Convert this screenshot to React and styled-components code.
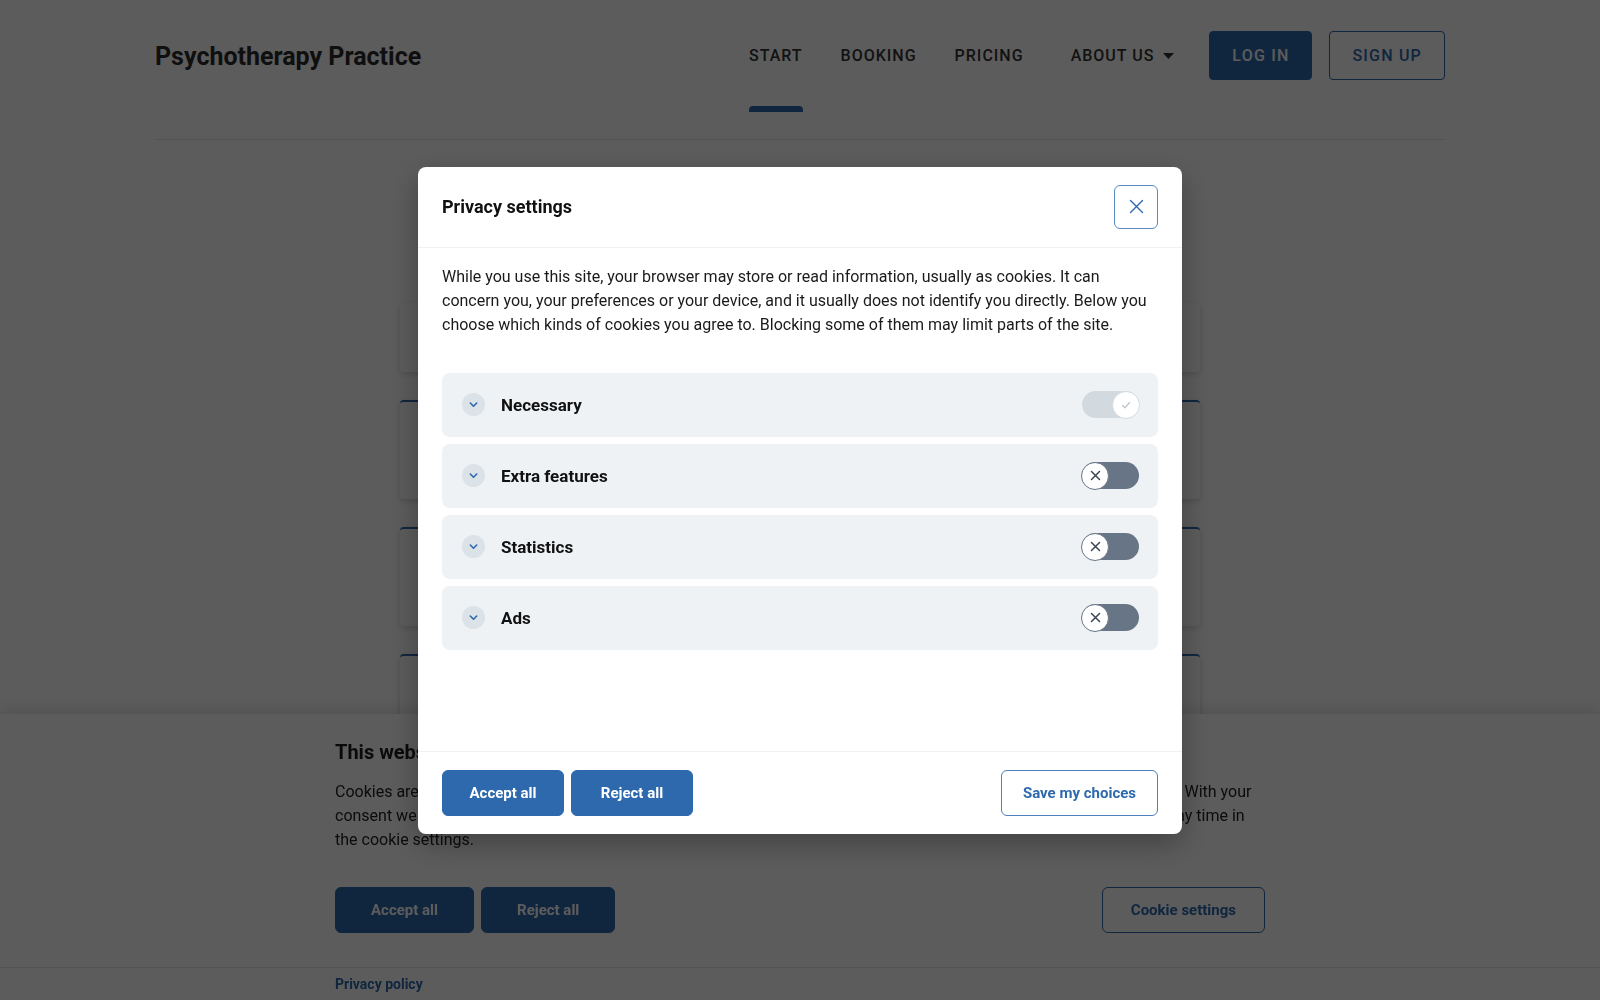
import React from "react";
import styled, { createGlobalStyle } from "styled-components";

const BLUE = "#2e69ad";

const categories = [
  { name: "Necessary", on: true, locked: true },
  { name: "Extra features", on: false },
  { name: "Statistics", on: false },
  { name: "Ads", on: false },
];

const GlobalStyle = createGlobalStyle`
  * { box-sizing: border-box; }
  body {
    margin: 0;
    background: #fff;
    color: #333;
    font-family: Roboto, "Noto Sans", "Liberation Sans", sans-serif;
  }
  button { font-family: inherit; cursor: pointer; }
`;

function CloseIcon() {
  return (
    <svg width="15" height="15" viewBox="0 0 15 15" fill="none">
      <path d="M1.5 1.5L13.5 13.5M13.5 1.5L1.5 13.5" stroke={BLUE} strokeWidth="1.4" strokeLinecap="round" />
    </svg>
  );
}

function Chevron() {
  return (
    <svg width="11" height="11" viewBox="0 0 11 11" fill="none">
      <path d="M2.3 4L5.5 7.2L8.7 4" stroke={BLUE} strokeWidth="1.6" strokeLinecap="round" strokeLinejoin="round" />
    </svg>
  );
}

function KnobIcon({ on }) {
  if (on) {
    return (
      <svg width="12" height="12" viewBox="0 0 12 12" fill="none">
        <path d="M2.5 6.5L5 8.8L9.5 3.5" stroke="#bcc5cb" strokeWidth="1.3" strokeLinecap="round" strokeLinejoin="round" />
      </svg>
    );
  }
  return (
    <svg width="11" height="11" viewBox="0 0 11 11" fill="none">
      <path d="M1.5 1.5L9.5 9.5M9.5 1.5L1.5 9.5" stroke="#3b4450" strokeWidth="1.5" strokeLinecap="round" />
    </svg>
  );
}

function Caret() {
  return (
    <svg width="11" height="6" viewBox="0 0 11 6">
      <polygon points="0,0 11,0 5.5,6" fill="#333" />
    </svg>
  );
}

export default function App() {
  return (
    <>
      <GlobalStyle />
      <Header>
        <Brand>Psychotherapy Practice</Brand>
        <Nav>
          <NavLink $active>Start</NavLink>
          <NavLink>Booking</NavLink>
          <NavLink>Pricing</NavLink>
          <NavLink $dropdown>
            About us <Caret />
          </NavLink>
        </Nav>
        <HeaderActions>
          <HeaderButton $filled>Log in</HeaderButton>
          <HeaderButton>Sign up</HeaderButton>
        </HeaderActions>
      </Header>

      <Main>
        <PageTitle>Welcome</PageTitle>
        <IntroCard>Book a session online in a few steps.</IntroCard>
        <Card>
          <CardTitle>Individual therapy</CardTitle>
          <CardText>One-to-one sessions in the practice or online.</CardText>
        </Card>
        <Card>
          <CardTitle>Couples therapy</CardTitle>
          <CardText>Sessions for partners who want to work together.</CardText>
        </Card>
        <Card>
          <CardTitle>Group therapy</CardTitle>
          <CardText>Small groups that meet every week.</CardText>
        </Card>
      </Main>

      <Banner>
        <BannerInner>
          <BannerTitle>This website uses cookies</BannerTitle>
          <BannerText>
            Cookies are small text files which help this website to work properly and to remember your settings between your visits. With your
            <br />
            consent we also use cookies for extra features, statistics and online ads. You can change or withdraw this consent at any time in
            <br />
            the cookie settings.
          </BannerText>
          <ButtonRow>
            <ButtonGroup>
              <BannerButton>Accept all</BannerButton>
              <BannerButton>Reject all</BannerButton>
            </ButtonGroup>
            <BannerButton $outline>Cookie settings</BannerButton>
          </ButtonRow>
        </BannerInner>
        <BannerFooter>
          <BannerInner>
            <PolicyLink>Privacy policy</PolicyLink>
          </BannerInner>
        </BannerFooter>
      </Banner>

      <Overlay>
        <Modal>
          <ModalHeader>
            <ModalTitle>Privacy settings</ModalTitle>
            <CloseButton aria-label="Close">
              <CloseIcon />
            </CloseButton>
          </ModalHeader>

          <ModalBody>
            <Intro>
              While you use this site, your browser may store or read information, usually as cookies. It can concern you, your
              preferences or your device, and it usually does not identify you directly. Below you choose which kinds of cookies you
              agree to. Blocking some of them may limit parts of the site.
            </Intro>
            <CategoryList>
              {categories.map((c) => (
                <CategoryRow key={c.name}>
                  <ChevronBadge>
                    <Chevron />
                  </ChevronBadge>
                  <CategoryName>{c.name}</CategoryName>
                  <Track $on={c.on}>
                    <Knob $on={c.on}>
                      <KnobIcon on={c.on} />
                    </Knob>
                  </Track>
                </CategoryRow>
              ))}
            </CategoryList>
          </ModalBody>

          <ModalFooter>
            <ButtonGroup>
              <ModalButton>Accept all</ModalButton>
              <ModalButton>Reject all</ModalButton>
            </ButtonGroup>
            <ModalButton $outline>Save my choices</ModalButton>
          </ModalFooter>
        </Modal>
      </Overlay>
    </>
  );
}

/* page behind */

const Header = styled.header`
  width: 1290px;
  height: 140px;
  margin: 0 auto;
  padding-top: 31px;
  display: flex;
  align-items: flex-start;
  border-bottom: 1px solid #e3e3e3;
`;

const Brand = styled.div`
  font-size: 25px;
  font-weight: 700;
  line-height: 51px;
  color: #2b2b2b;
  margin-right: auto;
`;

const Nav = styled.nav`
  display: flex;
  gap: 38px;
  margin-right: 35px;
`;

const NavLink = styled.a`
  position: relative;
  display: flex;
  align-items: center;
  gap: 9px;
  height: 49px;
  margin-left: ${(p) => (p.$dropdown ? "9px" : "0")};
  font-size: 16px;
  font-weight: 500;
  letter-spacing: 1px;
  text-transform: uppercase;
  color: #333;
  &::after {
    content: "";
    display: ${(p) => (p.$active ? "block" : "none")};
    position: absolute;
    left: 0;
    right: 0;
    top: 75px;
    height: 6px;
    border-radius: 4px 4px 0 0;
    background: ${BLUE};
  }
`;

const HeaderActions = styled.div`
  display: flex;
  gap: 17px;
`;

const HeaderButton = styled.button`
  height: 49px;
  padding: 0 22px;
  border-radius: 4px;
  border: 1px solid ${BLUE};
  background: ${(p) => (p.$filled ? BLUE : "#fff")};
  color: ${(p) => (p.$filled ? "#fff" : BLUE)};
  font-size: 16px;
  font-weight: 500;
  letter-spacing: 1.2px;
  text-transform: uppercase;
`;

const Main = styled.main`
  width: 800px;
  margin: 0 auto;
  padding: 55px 0 200px;
  display: flex;
  flex-direction: column;
  gap: 28px;
`;

const PageTitle = styled.h1`
  margin: 0 0 40px;
  font-size: 32px;
  line-height: 40px;
  text-align: center;
  color: #222;
`;

const IntroCard = styled.div`
  height: 69px;
  padding: 24px;
  background: #fff;
  border-radius: 4px;
  box-shadow: 0 2px 6px rgba(0, 0, 0, 0.16);
  font-size: 16px;
`;

const Card = styled.div`
  height: 99px;
  padding: 20px 24px;
  background: #fff;
  border-top: 2px solid ${BLUE};
  border-radius: 4px;
  box-shadow: 0 2px 6px rgba(0, 0, 0, 0.16);
`;

const CardTitle = styled.h3`
  margin: 0 0 8px;
  font-size: 18px;
  color: #222;
`;

const CardText = styled.p`
  margin: 0;
  font-size: 15px;
  color: #444;
`;

/* cookie banner */

const Banner = styled.section`
  position: fixed;
  left: 0;
  right: 0;
  bottom: 0;
  z-index: 10;
  background: #fff;
  box-shadow: 0 -4px 14px rgba(0, 0, 0, 0.12);
`;

const BannerInner = styled.div`
  width: 930px;
  margin: 0 auto;
`;

const BannerTitle = styled.h2`
  margin: 24px 0 14px;
  font-size: 20px;
  line-height: 28px;
  font-weight: 700;
  color: #1e1e1e;
`;

const BannerText = styled.p`
  margin: 0 0 35px;
  font-size: 16px;
  line-height: 24px;
  color: #222;
  white-space: nowrap;
`;

const ButtonRow = styled.div`
  display: flex;
  justify-content: space-between;
  margin-bottom: 34px;
`;

const ButtonGroup = styled.div`
  display: flex;
  gap: 7px;
`;

const BannerButton = styled.button`
  height: 46px;
  padding: ${(p) => (p.$outline ? "0 28px" : "0 35px")};
  border-radius: 6px;
  border: 1px solid ${BLUE};
  background: ${(p) => (p.$outline ? "#fff" : BLUE)};
  color: ${(p) => (p.$outline ? BLUE : "#fff")};
  font-size: 15px;
  font-weight: 700;
`;

const BannerFooter = styled.div`
  border-top: 1px solid #e6e6e6;
`;

const PolicyLink = styled.a`
  display: block;
  font-size: 14px;
  font-weight: 700;
  line-height: 32px;
  color: ${BLUE};
`;

/* privacy modal */

const Overlay = styled.div`
  position: fixed;
  inset: 0;
  z-index: 20;
  background: rgba(0, 0, 0, 0.64);
  display: flex;
  align-items: center;
  justify-content: center;
`;

const Modal = styled.div`
  width: 764px;
  height: 667px;
  background: #fff;
  border-radius: 8px;
  display: flex;
  flex-direction: column;
  box-shadow: 0 10px 30px rgba(0, 0, 0, 0.3);
`;

const ModalHeader = styled.div`
  display: flex;
  align-items: center;
  justify-content: space-between;
  padding: 18px 24px;
  border-bottom: 1px solid #eef0f2;
`;

const ModalTitle = styled.h2`
  margin: 0;
  font-size: 18px;
  font-weight: 700;
  color: #111;
`;

const CloseButton = styled.button`
  width: 44px;
  height: 44px;
  display: flex;
  align-items: center;
  justify-content: center;
  padding: 0;
  background: #fff;
  border: 1px solid #5a88bf;
  border-radius: 6px;
`;

const ModalBody = styled.div`
  flex: 1;
  padding: 17px 24px;
`;

const Intro = styled.p`
  margin: 0 0 36px;
  font-size: 16px;
  line-height: 24px;
  color: #1a1a1a;
`;

const CategoryList = styled.div`
  display: flex;
  flex-direction: column;
  gap: 7px;
`;

const CategoryRow = styled.div`
  height: 64px;
  padding: 0 19px 0 20px;
  display: flex;
  align-items: center;
  background: #eef2f5;
  border-radius: 8px;
`;

const ChevronBadge = styled.span`
  width: 23px;
  height: 23px;
  border-radius: 50%;
  background: #dbe2e8;
  display: flex;
  align-items: center;
  justify-content: center;
`;

const CategoryName = styled.span`
  margin-left: 16px;
  font-size: 17px;
  font-weight: 700;
  color: #111;
`;

const Track = styled.span`
  margin-left: auto;
  width: 57px;
  height: 27px;
  border-radius: 14px;
  display: flex;
  align-items: center;
  justify-content: ${(p) => (p.$on ? "flex-end" : "flex-start")};
  background: ${(p) => (p.$on ? "#d3dadf" : "#687586")};
`;

const Knob = styled.span`
  width: 28px;
  height: 28px;
  margin: 0 -1px;
  border-radius: 50%;
  background: #fff;
  border: 1px solid ${(p) => (p.$on ? "#d3dadf" : "#687586")};
  display: flex;
  align-items: center;
  justify-content: center;
`;

const ModalFooter = styled.div`
  display: flex;
  justify-content: space-between;
  padding: 18px 24px;
  border-top: 1px solid #eef0f2;
`;

const ModalButton = styled.button`
  height: 46px;
  min-width: 122px;
  padding: 0 21px;
  border-radius: 6px;
  border: 1px solid ${(p) => (p.$outline ? "#4f80bb" : BLUE)};
  background: ${(p) => (p.$outline ? "#fff" : BLUE)};
  color: ${(p) => (p.$outline ? BLUE : "#fff")};
  font-size: 15px;
  font-weight: 700;
`;
